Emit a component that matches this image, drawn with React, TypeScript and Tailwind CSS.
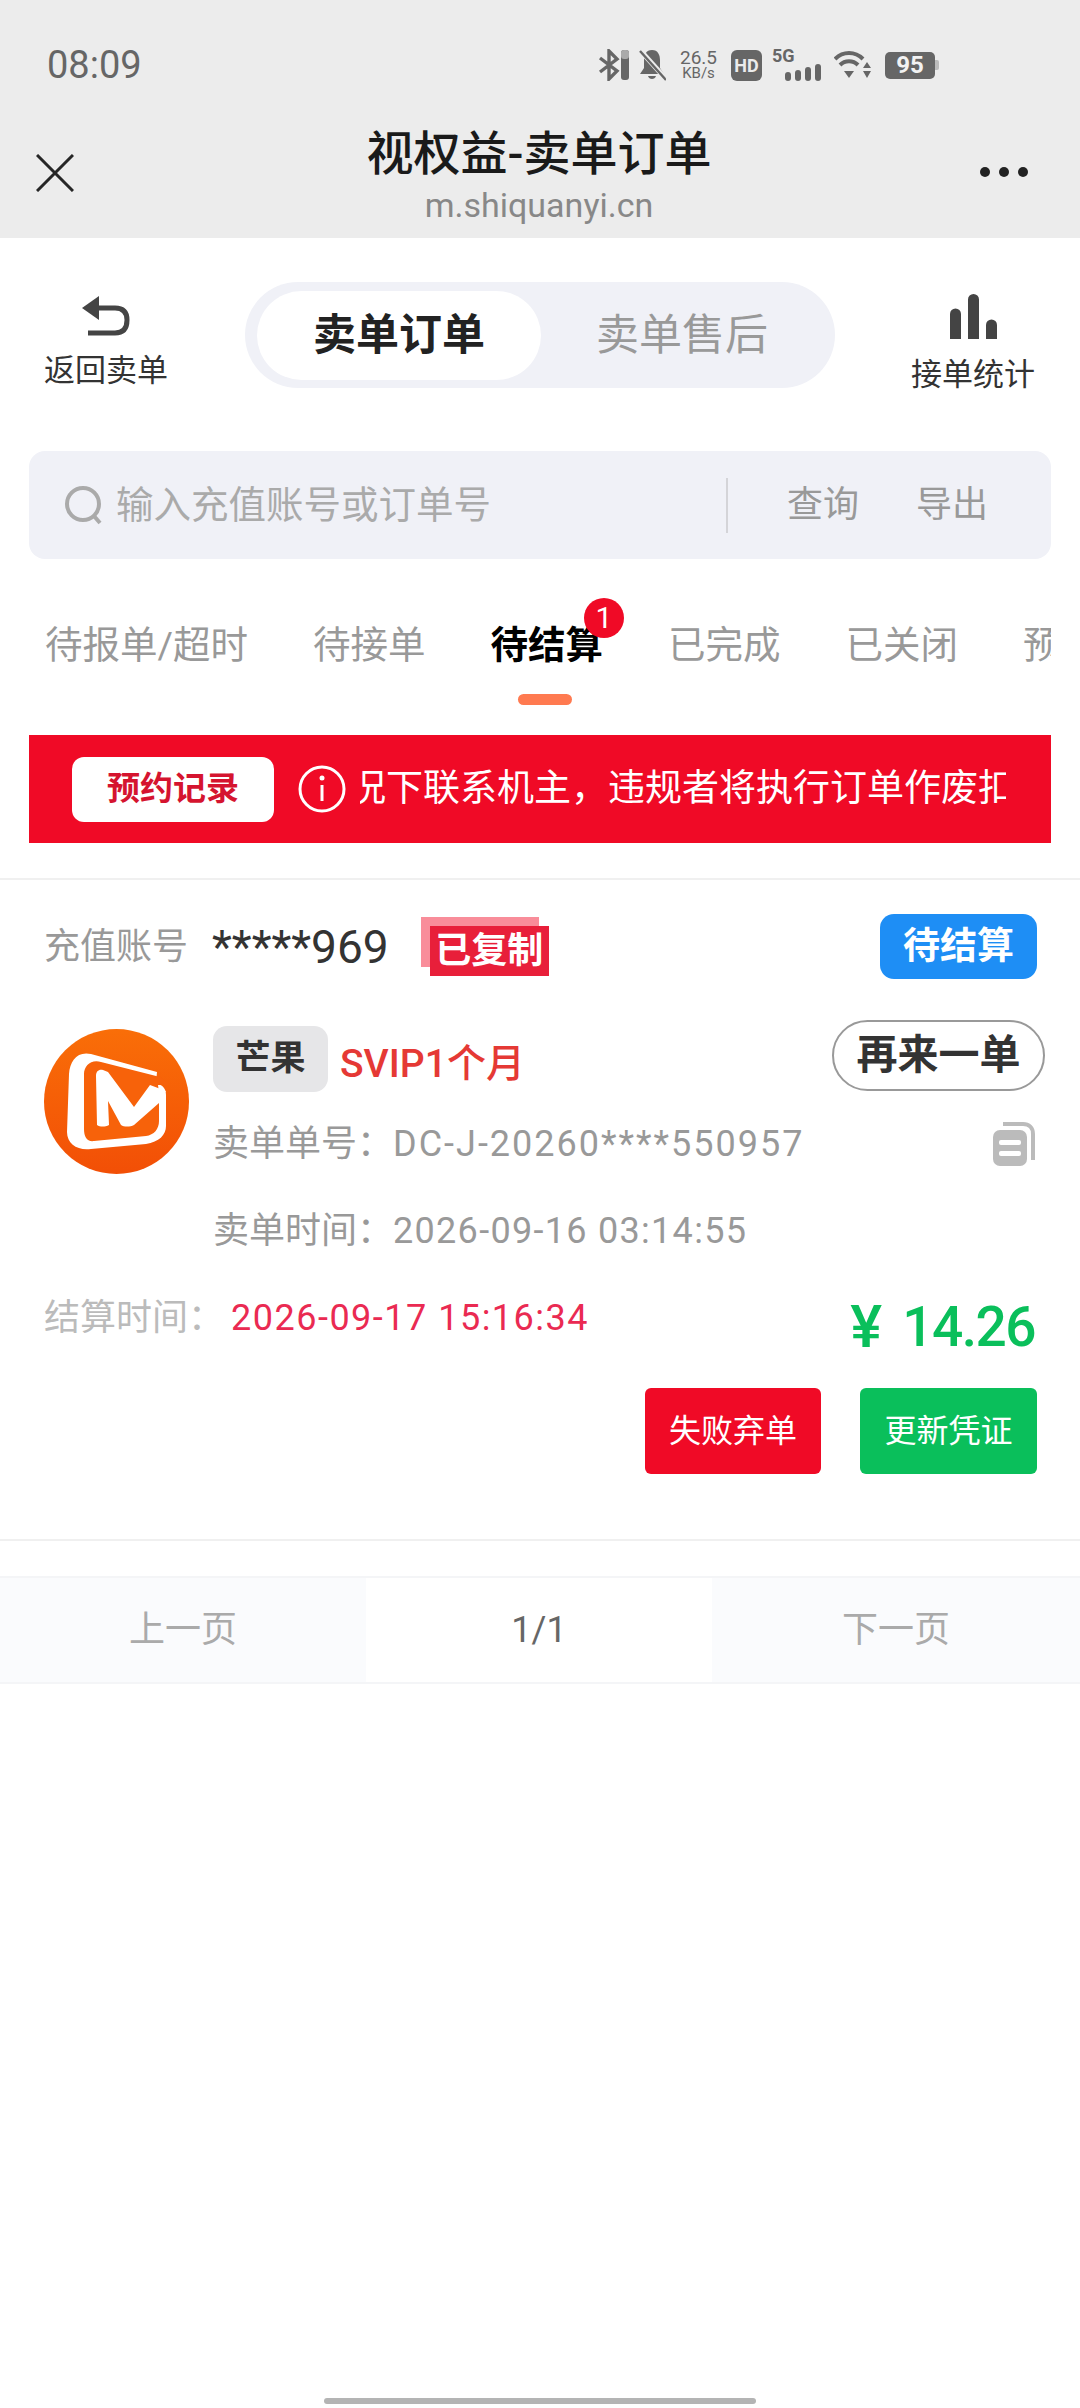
const cjk = "font-['Roboto','Noto_Sans_CJK_SC',sans-serif]";

const tabs = ['待报单/超时', '待接单', '待结算', '已完成', '已关闭', '预约单'];

function StatusIcons() {
  return (
    <div className="flex items-center h-[32px] text-[#666]">
      {/* bluetooth + level bar */}
      <svg width="32" height="32" viewBox="0 0 32 32" className="mr-[9px]">
        <path d="M2 9 L19 22 L11 30 V2 L19 10 L2 23" fill="none" stroke="#666" strokeWidth="3.4" />
        <rect x="23" y="1" width="8" height="30" rx="3" fill="#666" />
        <rect x="23" y="1" width="8" height="9" rx="3" fill="#aaa" />
      </svg>
      {/* muted bell */}
      <svg width="27" height="32" viewBox="0 0 27 32" className="mr-[14px]">
        <path d="M13 1 C7 1 5 6 5 11 V19 L1 25 H25 L21 19 V11 C21 6 19 1 13 1 Z M9 27 C10 31 16 31 17 27 Z" fill="#666" />
        <path d="M1 1 L27 30" stroke="#ececec" strokeWidth="5" />
        <path d="M1 2 L27 31" stroke="#666" strokeWidth="2.4" />
      </svg>
      <div className="flex flex-col items-center w-[37px] mr-[14px] font-['Roboto',sans-serif]">
        <span className="text-[19px] leading-[16px]">26.5</span>
        <span className="text-[15px] leading-[15px]">KB/s</span>
      </div>
      <span className="flex items-center justify-center w-[31px] h-[31px] rounded-[6px] bg-[#666] text-[#ececec] text-[18px] font-bold font-['Roboto',sans-serif] mr-[10px]">HD</span>
      {/* 5G + signal */}
      <div className="relative w-[49px] h-[32px] mr-[13px]">
        <span className="absolute left-0 top-[-3px] text-[18px] leading-[20px] font-bold font-['Roboto',sans-serif]">5G</span>
        <svg width="36" height="17" viewBox="0 0 36 17" className="absolute right-0 bottom-0">
          <rect x="0" y="8" width="6" height="9" rx="3" fill="#666" />
          <rect x="10" y="6" width="6" height="11" rx="3" fill="#666" />
          <rect x="20" y="3" width="6" height="14" rx="3" fill="#666" />
          <rect x="30" y="0" width="6" height="17" rx="3" fill="#666" />
        </svg>
      </div>
      {/* wifi with arrows */}
      <svg width="37" height="30" viewBox="0 0 37 30" className="mr-[14px]">
        <path d="M1 9 C9 1 21 1 29 9" fill="none" stroke="#666" strokeWidth="4" />
        <path d="M6 15 C11 10 19 10 24 15" fill="none" stroke="#666" strokeWidth="4" />
        <path d="M10 21 H20 L15 28 Z" fill="#666" />
        <path d="M33 12 L37 18 H29 Z M29 21 H37 L33 28 Z" fill="#666" />
      </svg>
      {/* battery */}
      <div className="flex items-center">
        <span className="flex items-center justify-center w-[50px] h-[27px] rounded-[5px] bg-[#666] text-[#f2f2f2] text-[24px] font-bold font-['Roboto',sans-serif]">95</span>
        <span className="w-[4px] h-[10px] rounded-r-[2px] bg-[#bbb]" />
      </div>
    </div>
  );
}

function MangoLogo() {
  return (
    <svg width="145" height="145" viewBox="0 0 145 145" className="shrink-0">
      <defs>
        <linearGradient id="mango" x1="0" y1="0" x2="0" y2="1">
          <stop offset="0" stopColor="#f96e08" />
          <stop offset="1" stopColor="#f24f06" />
        </linearGradient>
      </defs>
      <circle cx="72.5" cy="72.5" r="72.5" fill="url(#mango)" />
      {/* white tv outline */}
      <path d="M113 43 L47 25 C33 22 26 32 25 45 L23 103 C23 115 34 122 47 120 L102 115 C115 113 122 106 122 97 V66 C122 60 119 56 112 54 Z" fill="#fff" />
      {/* orange screen, opens out past the wedge tip */}
      <path d="M40 45 C40 37 47 30 57 33 L116 48 L126 56 L114 56 L115 64 V92 C115 100 110 106 102 107 L50 112 C43 113 40 108 40 100 Z" fill="#f7620a" />
      {/* M */}
      <path d="M52 47 C52 42 55 40 59 41 L64 43 L90 78 L106 56 L122 62 L115 74 L90 96 C86 98 80 98 77 96 L64 72 L65 96 C61 98 56 98 53 96 Z" fill="#fff" />
    </svg>
  );
}

export default function App() {
  return (
    <div className={`min-h-[2408px] w-[1080px] flex flex-col bg-white overflow-hidden ${cjk}`}>
      {/* Browser chrome */}
      <div className="h-[238px] bg-[#ececec] shrink-0">
        <div className="flex items-center justify-between pt-[49px] pl-[47px] pr-[141px]">
          <span className="text-[38px] leading-[32px] text-[#666]">08:09</span>
          <StatusIcons />
        </div>
        <div className="flex pt-[44px] pl-[36px] pr-[38px]">
          <div className="w-[100px] pt-[29px]">
            <svg width="38" height="38" viewBox="0 0 38 38">
              <path d="M1 1 L37 37 M37 1 L1 37" stroke="#262626" strokeWidth="3" />
            </svg>
          </div>
          <div className="flex-1 flex flex-col items-center">
            <span className="text-[47px] leading-[52px] mt-[3px] font-medium text-[#1a1a1a]">视权益-卖单订单</span>
            <span className="text-[34px] leading-[36px] mt-[7px] text-[#888]">m.shiquanyi.cn</span>
          </div>
          <div className="w-[100px] flex justify-end gap-[9px] pr-[14px] pt-[42px]">
            <span className="w-[10px] h-[10px] rounded-full bg-[#222]" />
            <span className="w-[10px] h-[10px] rounded-full bg-[#222]" />
            <span className="w-[10px] h-[10px] rounded-full bg-[#222]" />
          </div>
        </div>
      </div>

      {/* Top switch row */}
      <div className="flex items-center mt-[44px] h-[106px]">
        <div className="w-[212px] flex flex-col items-center pt-[16px]">
          <svg width="48" height="40" viewBox="0 0 48 40">
            <path d="M0 12 L17 0 V24 Z" fill="#444" />
            <path d="M14 12 H33 C41 12 45 16 45 24 C45 33 41 37 33 37 H6" fill="none" stroke="#444" strokeWidth="5" />
          </svg>
          <span className="text-[31px] leading-[40px] mt-[15px] text-[#333]">返回卖单</span>
        </div>
        <div className="ml-[33px] w-[590px] h-[106px] rounded-full bg-[#f0f1f7] flex items-center pl-[12px]">
          <div className="w-[284px] h-[89px] rounded-full bg-white flex items-center justify-center text-[43px] font-bold text-[#222]">卖单订单</div>
          <div className="flex-1 flex items-center justify-center pr-[12px] text-[43px] text-[#999]">卖单售后</div>
        </div>
        <div className="ml-[31px] w-[214px] flex flex-col items-center pt-[18px]">
          <svg width="47" height="45" viewBox="0 0 47 45">
            <path d="M0 45 V20 a5.5 5.5 0 0 1 11 0 V45 Z" fill="#444" />
            <path d="M18 45 V5.5 a5.5 5.5 0 0 1 11 0 V45 Z" fill="#444" />
            <path d="M36 45 V31 a5.5 5.5 0 0 1 11 0 V45 Z" fill="#444" />
          </svg>
          <span className="text-[31px] leading-[40px] mt-[16px] text-[#333]">接单统计</span>
        </div>
      </div>

      {/* Search */}
      <div className="mx-[29px] mt-[63px] h-[108px] rounded-[16px] bg-[#f0f1f7] flex items-center pl-[35px]">
        <svg width="40" height="40" viewBox="0 0 40 40" className="shrink-0">
          <circle cx="19" cy="19" r="16" fill="none" stroke="#aaa" strokeWidth="4" />
          <path d="M30 31 L36 38" stroke="#aaa" strokeWidth="4" />
        </svg>
        <span className="ml-[12px] text-[37.5px] text-[#aaa] whitespace-nowrap">输入充值账号或订单号</span>
        <div className="ml-auto w-[2px] h-[55px] bg-[#d4d4d8]" />
        <span className="ml-[59px] text-[36px] text-[#999]">查询</span>
        <span className="ml-[57px] mr-[63px] text-[36px] text-[#999]">导出</span>
      </div>

      {/* Status tabs */}
      <div className="mx-[29px] mt-[39px] h-[137px] overflow-hidden relative shrink-0">
        <div className="flex gap-[65px] pl-[16px] pt-[22px] whitespace-nowrap">
          {tabs.map((t) => (
            <div key={t} className="relative shrink-0">
              <span className={t === '待结算' ? 'text-[37.5px] leading-[50px] font-bold text-black' : 'text-[37.5px] leading-[50px] text-[#999]'}>{t}</span>
              {t === '待结算' && (
                <>
                  <span className="absolute right-[-21px] top-[-22px] w-[40px] h-[40px] rounded-full bg-[#f00a26] text-white text-[30px] leading-[40px] text-center">1</span>
                  <span className="absolute left-[28px] top-[74px] w-[54px] h-[11px] rounded-full bg-[#ff7a50]" />
                </>
              )}
            </div>
          ))}
        </div>
      </div>

      {/* Notice banner */}
      <div className="mx-[29px] h-[108px] bg-[#f00a26] flex items-center pl-[43px] shrink-0">
        <div className="w-[202px] h-[65px] rounded-[12px] bg-white flex items-center justify-center text-[33px] font-bold text-[#d5142f]">预约记录</div>
        <svg width="48" height="48" viewBox="0 0 48 48" className="ml-[24px] shrink-0">
          <circle cx="24" cy="24" r="22" fill="none" stroke="#fff" strokeWidth="3" />
          <circle cx="24" cy="13" r="2.5" fill="#fff" />
          <path d="M24 20 V36" stroke="#fff" strokeWidth="3" />
        </svg>
        <div className="ml-[14px] w-[646px] overflow-hidden">
          <div className="-ml-[11px] text-[37px] leading-[50px] text-white whitespace-nowrap">况下联系机主，违规者将执行订单作废扣款</div>
        </div>
      </div>

      {/* Order card */}
      <div className="mt-[35px] border-t-2 border-b-2 border-[#f0f0f0] h-[663px] flex flex-col px-[44px] pb-[66px] shrink-0">
        <div className="flex items-center mt-[34px] h-[65px] -mr-[1px]">
          <span className="text-[36px] text-[#999]">充值账号</span>
          <span className="ml-[24px] text-[46px] leading-[50px] text-[#333]">*****969</span>
          <div className="relative ml-[32px] w-[128px] h-[59px]">
            <span className="absolute left-0 top-0 w-[118px] h-[50px] bg-[#f98d9a]" />
            <span className="absolute left-[9px] top-[9px] w-[119px] h-[50px] bg-[#e81f3a] text-white text-[36px] leading-[50px] font-bold text-center">已复制</span>
          </div>
          <span className="ml-auto w-[157px] h-[65px] rounded-[14px] bg-[#1e8ef5] text-white text-[37px] font-bold flex items-center justify-center">待结算</span>
        </div>

        <div className="flex mt-[49px]">
          <div className="pt-[1px]">
            <MangoLogo />
          </div>
          <div className="ml-[24px] flex-1 flex flex-col">
            <div className="flex items-center h-[66px] relative -mt-[2px]">
              <span className="w-[115px] h-[66px] rounded-[14px] bg-[#e6e6e8] flex items-center justify-center text-[35px] font-bold text-[#333]">芒果</span>
              <span className="ml-[12px] text-[39px] font-medium text-[#e53935] translate-y-[5px]">SVIP1个月</span>
              <span className="absolute right-[-9px] top-[-6px] w-[213px] h-[71px] rounded-full border-2 border-[#999] bg-white flex items-center justify-center text-[41px] font-bold text-[#333]">再来一单</span>
            </div>
            <div className="flex items-center justify-between mt-[27px] h-[50px]">
              <span className="text-[36px] text-[#999] whitespace-nowrap">卖单单号：<span className="tracking-[2px]">DC-J-20260****550957</span></span>
              <svg width="42" height="44" viewBox="0 0 42 44" className="mr-[1px]">
                <path d="M10 2 H30 C36 2 40 6 40 12 V38" fill="none" stroke="#bbb" strokeWidth="4" />
                <rect x="0" y="8" width="34" height="36" rx="7" fill="#bbb" />
                <rect x="6" y="18" width="22" height="5" rx="2" fill="#fff" />
                <rect x="6" y="29" width="22" height="5" rx="2" fill="#fff" />
              </svg>
            </div>
            <span className="mt-[37px] text-[36px] leading-[50px] text-[#999] whitespace-nowrap">卖单时间：<span className="tracking-[1.3px]">2026-09-16 03:14:55</span></span>
          </div>
        </div>

        <div className="flex items-start justify-between mt-[37px]">
          <div className="flex text-[36px] leading-[50px] whitespace-nowrap">
            <span className="text-[#bbb] w-[187px]">结算时间：</span>
            <span className="text-[#ea2a52] tracking-[1.5px]">2026-09-17 15:16:34</span>
          </div>
          <div className="flex items-center font-medium text-[#0abf5b] mr-[1px] mt-[2px]">
            <span className="text-[60px] leading-[64px]">¥</span>
            <span className="ml-[20px] text-[55px] leading-[64px] tracking-[-1.5px]">14.26</span>
          </div>
        </div>

        <div className="flex justify-end gap-[39px] mt-[29px] -mr-[1px]">
          <span className="w-[176px] h-[86px] rounded-[6px] bg-[#f00a26] text-white text-[32px] flex items-center justify-center">失败弃单</span>
          <span className="w-[177px] h-[86px] rounded-[6px] bg-[#0abf5b] text-white text-[32px] flex items-center justify-center">更新凭证</span>
        </div>
      </div>

      {/* Pagination */}
      <div className="flex mt-[35px] h-[108px] border-y-2 border-[#f4f5f7] shrink-0">
        <div className="w-[366px] bg-[#fafbfd] flex items-center justify-center text-[36px] text-[#aaa]">上一页</div>
        <div className="w-[346px] flex items-center justify-center text-[36px] text-[#666]">1/1</div>
        <div className="flex-1 bg-[#fafbfd] flex items-center justify-center text-[36px] text-[#aaa]">下一页</div>
      </div>

      {/* Gesture bar */}
      <div className="mt-auto mb-[4px] mx-auto w-[432px] h-[6px] rounded-full bg-[#b4b4b4]" />
    </div>
  );
}
